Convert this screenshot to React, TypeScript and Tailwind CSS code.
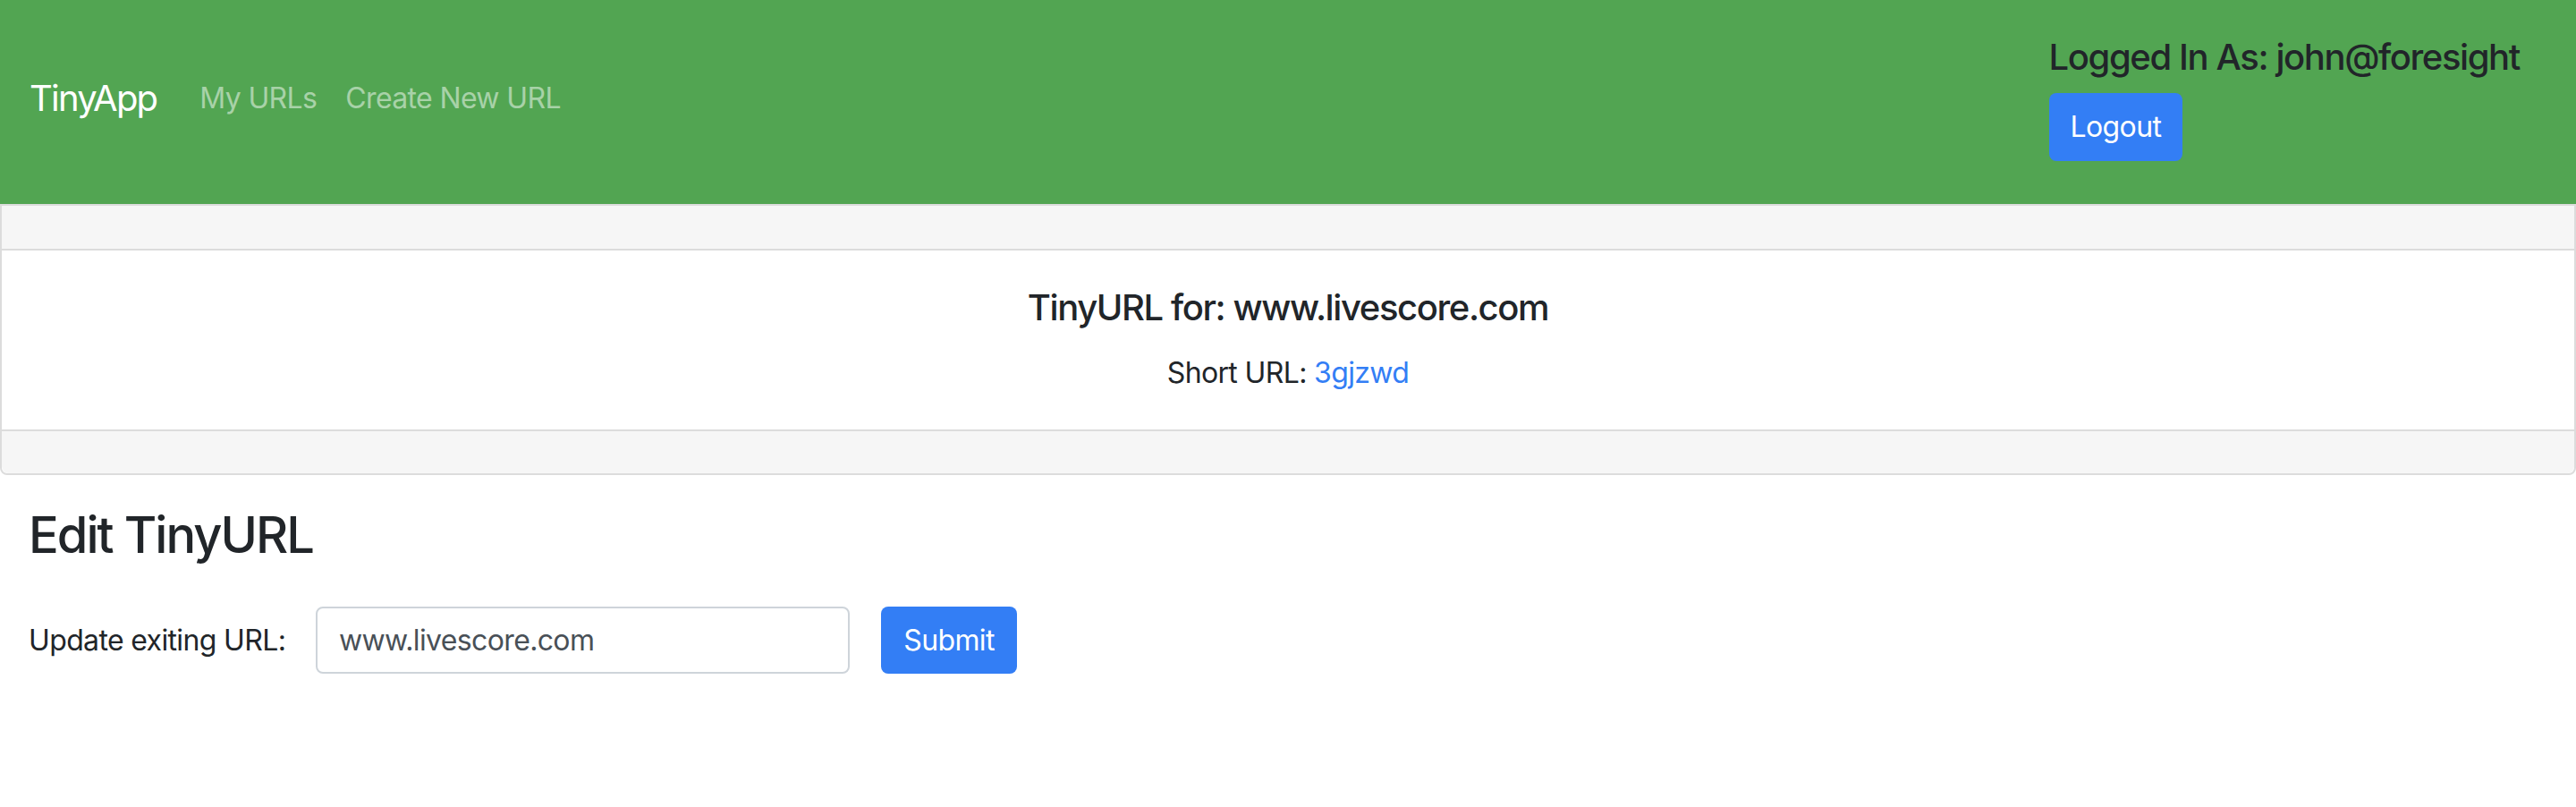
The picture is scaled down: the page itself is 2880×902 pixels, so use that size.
import React, { useState } from 'react';

export default function App() {
  const [longUrl, setLongUrl] = useState('www.livescore.com');

  return (
    <div className="min-h-screen bg-white text-[#212529] font-['Inter','Liberation_Sans',sans-serif]">
      <nav className="h-[228px] bg-[#52a552] px-[33px] flex items-center justify-between">
        <div className="flex items-center">
          <a href="#" className="text-[40px] leading-[60px] tracking-[-0.045em] text-white mr-[48px] -mt-[8px]">TinyApp</a>
          <div className="flex items-center gap-[32px] -mt-[8px]">
            <a href="#" className="text-[32px] tracking-[-0.02em] text-white/50">My URLs</a>
            <a href="#" className="text-[32px] tracking-[-0.02em] text-white/50">Create New URL</a>
          </div>
        </div>
        <div className="flex flex-col items-start mr-[30px] mb-[8px]">
          <h5 className="text-[40px] leading-[48px] tracking-[-0.035em] font-medium mb-[16px]">Logged In As: john@foresight</h5>
          <button className="h-[76px] px-[24px] rounded-[8px] bg-[#337ef5] text-white text-[32px] tracking-[-0.02em]">Logout</button>
        </div>
      </nav>

      <div className="border-2 border-[#dcdcdc] rounded-b-[8px] text-center">
        <div className="h-[50px] bg-[#f6f6f6] border-b-2 border-[#dcdcdc]"></div>
        <div className="h-[200px] pt-[40px]">
          <h5 className="text-[40px] leading-[48px] tracking-[-0.035em] font-medium mb-[25px]">TinyURL for: www.livescore.com</h5>
          <p className="text-[32px] leading-[48px] tracking-[-0.02em]">
            Short URL: <a href="#" className="text-[#337ef5]">3gjzwd</a>
          </p>
        </div>
        <div className="h-[49px] bg-[#f6f6f6] border-t-2 border-[#dcdcdc] rounded-b-[8px]"></div>
      </div>

      <main className="px-[32px]">
        <h3 className="mt-[34px] text-[56px] leading-[67px] tracking-[-0.035em] font-medium">Edit TinyURL</h3>
        <form className="mt-[46px] flex items-center" onSubmit={(e) => e.preventDefault()}>
          <label className="w-[321px] text-[32px] tracking-[-0.02em]">Update exiting URL:</label>
          <input
            value={longUrl}
            onChange={(e) => setLongUrl(e.target.value)}
            className="w-[597px] h-[75px] px-[24px] border-2 border-[#ced4da] rounded-[8px] text-[32px] tracking-[-0.02em] text-[#495057] outline-none"
          />
          <button type="submit" className="ml-[35px] w-[152px] h-[75px] rounded-[8px] bg-[#337ef5] text-white text-[32px] tracking-[-0.02em]">Submit</button>
        </form>
      </main>
    </div>
  );
}
